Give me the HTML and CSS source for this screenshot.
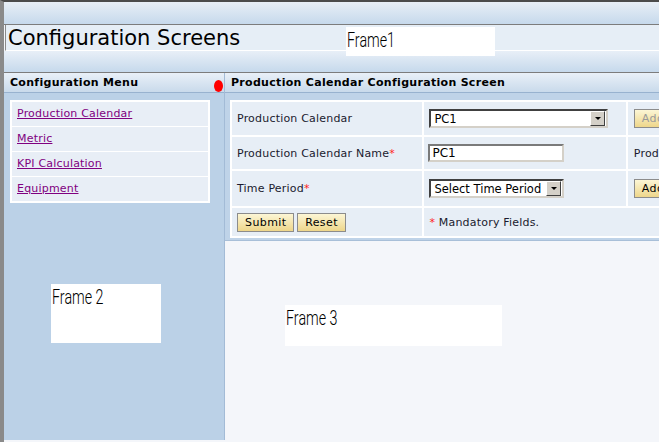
FILE: index.html
```html
<!DOCTYPE html>
<html lang="en">
<head>
    <meta charset="UTF-8">
    <title>Configuration Screens</title>
    <link rel="stylesheet" href="styles.css">
</head>
<body>
    <div class="page">
        <!-- Frame 1 : bandeau du haut -->
        <div class="masthead">
            <div class="band"></div>
            <div class="title-row">
                <h1>Configuration Screens</h1>
            </div>
            <div class="band band-low"></div>
            <div class="frame-label frame1"><span>Frame1</span></div>
        </div>

        <div class="main">
            <!-- Frame 2 : menu -->
            <div class="menu">
                <div class="bar">Configuration Menu<span class="dot"></span></div>
                <ul class="menu-list">
                    <li><a href="#">Production Calendar</a></li>
                    <li><a href="#">Metric</a></li>
                    <li><a href="#">KPI Calculation</a></li>
                    <li><a href="#">Equipment</a></li>
                </ul>
                <div class="frame-label frame2"><span>Frame 2</span></div>
            </div>

            <!-- Frame 3 : écran de configuration -->
            <div class="content">
                <div class="bar">Production Calendar Configuration Screen</div>
                <div class="panel">
                    <table class="form">
                        <colgroup>
                            <col class="col-label">
                            <col class="col-field">
                            <col class="col-extra">
                        </colgroup>
                        <tr class="row-1">
                            <td>Production Calendar</td>
                            <td>
                                <span class="select wide"><span class="value">PC1</span><span class="arrow"></span></span>
                            </td>
                            <td class="c-extra"><button class="btn" disabled>Add</button></td>
                        </tr>
                        <tr class="row-2">
                            <td>Production Calendar Name<span class="req">*</span></td>
                            <td><input class="text" type="text" value="PC1"></td>
                            <td class="c-extra">Production</td>
                        </tr>
                        <tr class="row-3">
                            <td>Time Period<span class="req">*</span></td>
                            <td>
                                <span class="select"><span class="value">Select Time Period</span><span class="arrow"></span></span>
                            </td>
                            <td class="c-extra"><button class="btn">Add</button></td>
                        </tr>
                        <tr class="row-4">
                            <td>
                                <button class="btn">Submit</button>
                                <button class="btn">Reset</button>
                            </td>
                            <td colspan="2"><span class="req">*</span> Mandatory Fields.</td>
                        </tr>
                    </table>
                </div>
                <div class="frame-label frame3"><span>Frame 3</span></div>
            </div>
        </div>
    </div>
</body>
</html>
```

FILE: styles.css
```css
body {
    margin: 0;
    width: 659px;
    height: 442px;
    overflow: hidden;
    background-color: #f4f6fa;
    font-family: "DejaVu Sans", Verdana, sans-serif;
    font-size: 11px;
    letter-spacing: 0.2px;
    color: #1a1a2e;
}

.page {
    height: 440px;
    border-top: 2px solid #4c4c4c;
    border-left: 4px solid #8a8a8a;
    width: 700px;
}

/* Bandeau */
.masthead {
    position: relative;
}

.band {
    height: 22px;
    background: linear-gradient(#e8eff7, #c6d9ec);
    border-bottom: 1px solid #7c7c7c;
}

.title-row {
    height: 25px;
    margin-left: 1px;
    border-left: 1px solid #8a8a8a;
    border-bottom: 1px solid #ffffff;
    background-color: #e6eef6;
}

.title-row h1 {
    margin: 0;
    padding-left: 2px;
    font-size: 21px;
    font-weight: normal;
    letter-spacing: 0;
    line-height: 26px;
    color: #000;
}

.band-low {
    height: 21px;
    border-bottom: 1px solid #7c7c7c;
}

.frame-label {
    background-color: #fff;
    font-family: Roboto, "DejaVu Sans", sans-serif;
    font-size: 21px;
    font-weight: 300;
    letter-spacing: 0;
    line-height: 22px;
    color: #000;
    padding: 2px 0 0 1px;
    box-sizing: border-box;
    white-space: nowrap;
}

.frame-label span {
    display: inline-block;
    transform: scaleX(0.68);
    transform-origin: left top;
}

.frame1 {
    position: absolute;
    left: 342px;
    top: 25px;
    width: 149px;
    height: 29px;
}

/* Zone principale */
.main {
    display: grid;
    grid-template-columns: 220px 1fr;
    height: 367px;
}

.bar {
    position: relative;
    height: 19px;
    line-height: 19px;
    padding-left: 6px;
    font-weight: bold;
    letter-spacing: 0.3px;
    color: #000;
    background: linear-gradient(#e9f0f8, #c9daeb);
    border-bottom: 1px solid #98b2cf;
}

.dot {
    position: absolute;
    right: 1px;
    top: 7px;
    width: 9px;
    height: 12px;
    border-radius: 50%;
    background-color: #ff0000;
}

.menu {
    background-color: #bbd1e7;
}

.menu-list {
    list-style: none;
    margin: 7px 0 0 6px;
    padding: 0;
    width: 196px;
    border: 2px solid #fff;
    border-bottom-width: 1px;
}

.menu-list li {
    height: 24px;
    line-height: 23px;
    padding-left: 5px;
    background-color: #e8eef6;
    border-bottom: 1px solid #fff;
}

.menu-list a {
    color: #800080;
}

.frame2 {
    margin: 81px 0 0 47px;
    width: 110px;
    height: 59px;
}

.content {
    border-left: 1px solid #a3bbd6;
    overflow: hidden;
}

.panel {
    background-color: #bfd3e8;
    padding: 7px 0 2px 5px;
    border-bottom: 1px solid #a8bfd8;
}

.form {
    border-collapse: separate;
    border-spacing: 2px;
    background-color: #fff;
    table-layout: fixed;
    width: 480px;
}

.col-label { width: 190px; }
.col-field { width: 201px; }
.col-extra { width: 80px; }

.form td {
    background-color: #e7eef6;
    padding: 0 0 0 5px;
    white-space: nowrap;
    overflow: hidden;
}

.form td.c-extra {
    padding-left: 6px;
}

.row-1 td { height: 33px; }
.row-2 td { height: 32px; }
.row-3 td { height: 35px; }
.row-4 td { height: 28px; }

.req {
    color: #ff2020;
}

.select {
    display: inline-flex;
    align-items: center;
    justify-content: space-between;
    box-sizing: border-box;
    width: 135px;
    height: 19px;
    padding: 0 1px 0 3px;
    background-color: #fff;
    border: 2px solid;
    border-color: #404040 #d4d0c8 #d4d0c8 #404040;
    vertical-align: middle;
    font-size: 11.5px;
    letter-spacing: 0;
    color: #000;
}

.select.wide {
    width: 179px;
}

.arrow {
    position: relative;
    width: 13px;
    height: 13px;
    background-color: #d4d0c8;
    border: 1px solid;
    border-color: #fff #404040 #404040 #fff;
}

.arrow::after {
    content: "";
    position: absolute;
    left: 4px;
    top: 5px;
    border-left: 3px solid transparent;
    border-right: 3px solid transparent;
    border-top: 3px solid #000;
}

.text {
    box-sizing: border-box;
    width: 136px;
    height: 18px;
    padding: 0 2px;
    font-family: inherit;
    font-size: 12px;
    color: #000;
    border: 2px solid;
    border-color: #7a7a7a #d4d0c8 #d4d0c8 #7a7a7a;
    margin: 0 0 0 -1px;
}

.btn {
    height: 19px;
    padding: 0 7px;
    vertical-align: middle;
    font-family: inherit;
    font-size: 11px;
    letter-spacing: 0.4px;
    color: #000;
    background: linear-gradient(#fcf6d6, #eed68a);
    border: 1px solid #8c8c8c;
}

.btn + .btn {
    margin-left: -1px;
}

.btn:disabled {
    color: #9a9a9a;
}

.frame3 {
    margin: 64px 0 0 60px;
    width: 217px;
    height: 41px;
}
```
